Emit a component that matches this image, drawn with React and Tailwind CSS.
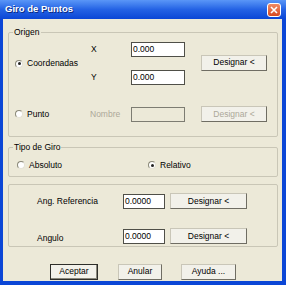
import React from "react";

const Radio = ({ checked, label, disabled }) => (
  <div className="flex items-center h-[12px]">
    <div className="w-[8px] h-[8px] rounded-full border border-[#8a8878] border-b-[#e4e2d6] border-r-[#e4e2d6] bg-white flex items-center justify-center">
      {checked && <div className="w-[3px] h-[3px] rounded-full bg-[#222]" />}
    </div>
    <span className={"ml-[4px] " + (disabled ? "text-[#aca899]" : "text-black")}>{label}</span>
  </div>
);

const Field = ({ value, w = "w-[54px]", disabled }) => (
  <div
    className={
      w +
      " h-[15px] border flex items-center pl-[1px] " +
      (disabled ? "border-[#7d7c72] bg-[#ece9d8]" : "border-[#4f4f48] bg-white")
    }
  >
    {value}
  </div>
);

const Btn = ({ label, w = "w-[66px]", disabled, primary }) => (
  <div
    className={
      w +
      " h-[16px] flex items-center justify-center border bg-[#f2f1ea] " +
      (primary
        ? "border-[#2e2e2a] shadow-[inset_-1px_-1px_0_#8a887c]"
        : "border-[#c9c6b8] border-r-[#6f6d63] border-b-[#6f6d63]") +
      (disabled ? " text-[#aca899]" : " text-black")
    }
  >
    {label}
  </div>
);

const Group = ({ title, className, children }) => (
  <div className={"relative border border-[#c9c6b6] rounded-[2px] " + className}>
    {title && (
      <span className="absolute left-[4px] -top-[6px] px-[1px] bg-[#ece9d8] leading-[10px]">{title}</span>
    )}
    {children}
  </div>
);

export default function App() {
  return (
    <div
      className="w-[286px] h-[285px] flex flex-col bg-[#0b46d6] text-[8.5px] text-black"
      style={{ fontFamily: '"Liberation Sans", Arial, sans-serif' }}
    >
      {/* title bar */}
      <div className="h-[19px] flex items-center justify-between pl-[5px] pr-[5px] bg-gradient-to-b from-[#5a96f7] via-[#2462e4] to-[#0b46d6]">
        <span className="text-white font-bold text-[9.5px] [text-shadow:1px_1px_0_#0a2a80]">Giro de Puntos</span>
        <div className="w-[14px] h-[14px] rounded-[3px] border border-white bg-gradient-to-b from-[#f08a64] to-[#d8491f] flex items-center justify-center">
          <svg width="8" height="8" viewBox="0 0 8 8">
            <path d="M1 1L7 7M7 1L1 7" stroke="white" strokeWidth="1.6" />
          </svg>
        </div>
      </div>

      {/* body */}
      <div className="flex-1 ml-[3px] mr-[4px] mb-[4px] bg-[#ece9d8] pt-[13px] pl-[5px] pr-[4px] flex flex-col">
        {/* Origen */}
        <Group title="Origen" className="pt-[9px] pb-[14px] pl-[6px]">
          <div className="flex items-center">
            <div className="w-[76px]">
              <Radio checked label="Coordenadas" />
            </div>
            <div className="flex flex-col gap-[13px]">
              <div className="flex items-center">
                <span className="w-[40px]">X</span>
                <Field value="0.000" />
              </div>
              <div className="flex items-center">
                <span className="w-[40px]">Y</span>
                <Field value="0.000" />
              </div>
            </div>
            <div className="ml-[16px] mb-[2px]">
              <Btn label="Designar <" />
            </div>
          </div>
          <div className="flex items-center mt-[21px]">
            <div className="w-[75px]">
              <Radio label="Punto" />
            </div>
            <span className="w-[41px] text-[#aca899]">Nombre</span>
            <Field value="" disabled />
            <div className="ml-[16px]">
              <Btn label="Designar <" disabled />
            </div>
          </div>
        </Group>

        {/* Tipo de Giro */}
        <Group title="Tipo de Giro" className="mt-[10px] pt-[11px] pb-[5px] pl-[8px]">
          <div className="flex items-center">
            <div className="w-[131px]">
              <Radio label="Absoluto" />
            </div>
            <Radio checked label="Relativo" />
          </div>
        </Group>

        {/* angulos */}
        <Group className="mt-[7px] pt-[8px] pb-[1px] pl-[28px]">
          <div className="flex items-center">
            <span className="w-[86px]">Ang. Referencia</span>
            <Field value="0.0000" w="w-[42px]" />
            <div className="ml-[5px]">
              <Btn label="Designar <" w="w-[77px]" />
            </div>
          </div>
          <div className="flex items-center mt-[19px]">
            <span className="w-[86px] pt-[4px]">Angulo</span>
            <Field value="0.0000" w="w-[42px]" />
            <div className="ml-[5px]">
              <Btn label="Designar <" w="w-[77px]" />
            </div>
          </div>
        </Group>

        {/* buttons */}
        <div className="flex mt-[17px] pl-[42px] gap-[20px]">
          <Btn label="Aceptar" w="w-[48px]" primary />
          <Btn label="Anular" w="w-[44px]" />
          <div className="-ml-[1px]">
            <Btn label="Ayuda ..." w="w-[55px]" />
          </div>
        </div>
      </div>
    </div>
  );
}
